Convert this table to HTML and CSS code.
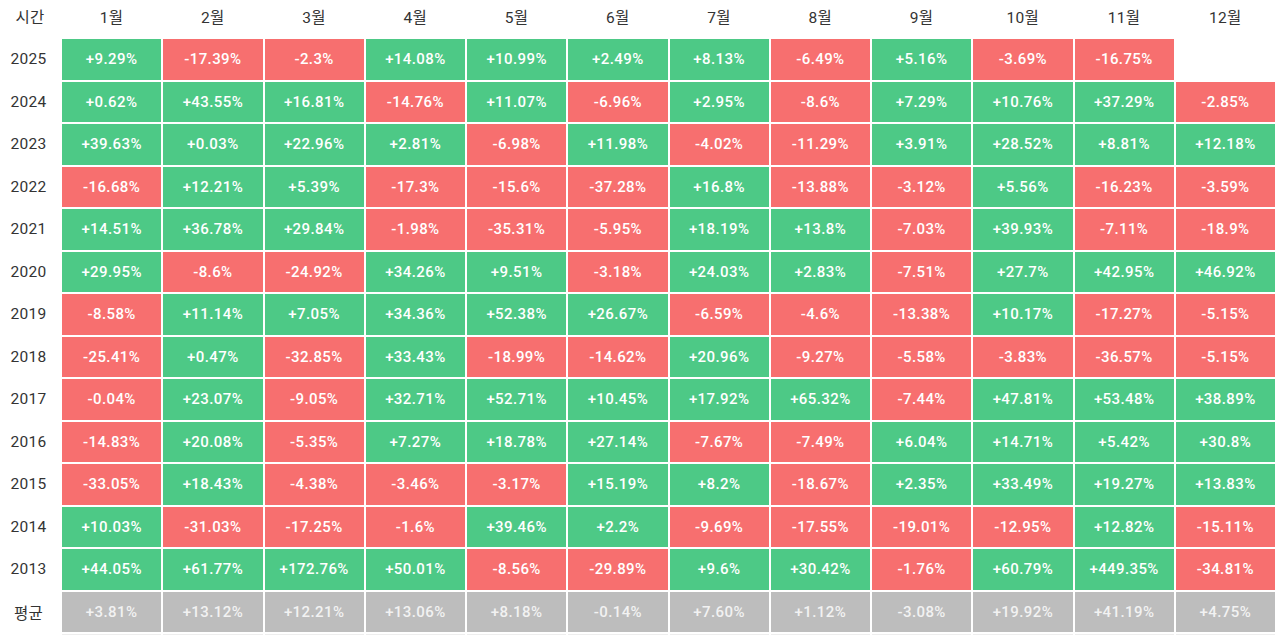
FILE: index.html
```html
<!DOCTYPE html>
<html lang="ko">
<head>
<meta charset="utf-8">
<title>월별 수익률</title>
<link rel="stylesheet" href="styles.css">
</head>
<body>
<div class="grid">
  <div class="hd lbl">시간</div>
  <div class="hd">1월</div><div class="hd">2월</div><div class="hd">3월</div><div class="hd">4월</div><div class="hd">5월</div><div class="hd">6월</div><div class="hd">7월</div><div class="hd">8월</div><div class="hd">9월</div><div class="hd">10월</div><div class="hd">11월</div><div class="hd">12월</div>

  <div class="yr">2025</div>
  <div class="c up">+9.29%</div><div class="c dn">-17.39%</div><div class="c dn">-2.3%</div><div class="c up">+14.08%</div><div class="c up">+10.99%</div><div class="c up">+2.49%</div><div class="c up">+8.13%</div><div class="c dn">-6.49%</div><div class="c up">+5.16%</div><div class="c dn">-3.69%</div><div class="c dn">-16.75%</div><div class="c empty"></div>

  <div class="yr">2024</div>
  <div class="c up">+0.62%</div><div class="c up">+43.55%</div><div class="c up">+16.81%</div><div class="c dn">-14.76%</div><div class="c up">+11.07%</div><div class="c dn">-6.96%</div><div class="c up">+2.95%</div><div class="c dn">-8.6%</div><div class="c up">+7.29%</div><div class="c up">+10.76%</div><div class="c up">+37.29%</div><div class="c dn">-2.85%</div>

  <div class="yr">2023</div>
  <div class="c up">+39.63%</div><div class="c up">+0.03%</div><div class="c up">+22.96%</div><div class="c up">+2.81%</div><div class="c dn">-6.98%</div><div class="c up">+11.98%</div><div class="c dn">-4.02%</div><div class="c dn">-11.29%</div><div class="c up">+3.91%</div><div class="c up">+28.52%</div><div class="c up">+8.81%</div><div class="c up">+12.18%</div>

  <div class="yr">2022</div>
  <div class="c dn">-16.68%</div><div class="c up">+12.21%</div><div class="c up">+5.39%</div><div class="c dn">-17.3%</div><div class="c dn">-15.6%</div><div class="c dn">-37.28%</div><div class="c up">+16.8%</div><div class="c dn">-13.88%</div><div class="c dn">-3.12%</div><div class="c up">+5.56%</div><div class="c dn">-16.23%</div><div class="c dn">-3.59%</div>

  <div class="yr">2021</div>
  <div class="c up">+14.51%</div><div class="c up">+36.78%</div><div class="c up">+29.84%</div><div class="c dn">-1.98%</div><div class="c dn">-35.31%</div><div class="c dn">-5.95%</div><div class="c up">+18.19%</div><div class="c up">+13.8%</div><div class="c dn">-7.03%</div><div class="c up">+39.93%</div><div class="c dn">-7.11%</div><div class="c dn">-18.9%</div>

  <div class="yr">2020</div>
  <div class="c up">+29.95%</div><div class="c dn">-8.6%</div><div class="c dn">-24.92%</div><div class="c up">+34.26%</div><div class="c up">+9.51%</div><div class="c dn">-3.18%</div><div class="c up">+24.03%</div><div class="c up">+2.83%</div><div class="c dn">-7.51%</div><div class="c up">+27.7%</div><div class="c up">+42.95%</div><div class="c up">+46.92%</div>

  <div class="yr">2019</div>
  <div class="c dn">-8.58%</div><div class="c up">+11.14%</div><div class="c up">+7.05%</div><div class="c up">+34.36%</div><div class="c up">+52.38%</div><div class="c up">+26.67%</div><div class="c dn">-6.59%</div><div class="c dn">-4.6%</div><div class="c dn">-13.38%</div><div class="c up">+10.17%</div><div class="c dn">-17.27%</div><div class="c dn">-5.15%</div>

  <div class="yr">2018</div>
  <div class="c dn">-25.41%</div><div class="c up">+0.47%</div><div class="c dn">-32.85%</div><div class="c up">+33.43%</div><div class="c dn">-18.99%</div><div class="c dn">-14.62%</div><div class="c up">+20.96%</div><div class="c dn">-9.27%</div><div class="c dn">-5.58%</div><div class="c dn">-3.83%</div><div class="c dn">-36.57%</div><div class="c dn">-5.15%</div>

  <div class="yr">2017</div>
  <div class="c dn">-0.04%</div><div class="c up">+23.07%</div><div class="c dn">-9.05%</div><div class="c up">+32.71%</div><div class="c up">+52.71%</div><div class="c up">+10.45%</div><div class="c up">+17.92%</div><div class="c up">+65.32%</div><div class="c dn">-7.44%</div><div class="c up">+47.81%</div><div class="c up">+53.48%</div><div class="c up">+38.89%</div>

  <div class="yr">2016</div>
  <div class="c dn">-14.83%</div><div class="c up">+20.08%</div><div class="c dn">-5.35%</div><div class="c up">+7.27%</div><div class="c up">+18.78%</div><div class="c up">+27.14%</div><div class="c dn">-7.67%</div><div class="c dn">-7.49%</div><div class="c up">+6.04%</div><div class="c up">+14.71%</div><div class="c up">+5.42%</div><div class="c up">+30.8%</div>

  <div class="yr">2015</div>
  <div class="c dn">-33.05%</div><div class="c up">+18.43%</div><div class="c dn">-4.38%</div><div class="c dn">-3.46%</div><div class="c dn">-3.17%</div><div class="c up">+15.19%</div><div class="c up">+8.2%</div><div class="c dn">-18.67%</div><div class="c up">+2.35%</div><div class="c up">+33.49%</div><div class="c up">+19.27%</div><div class="c up">+13.83%</div>

  <div class="yr">2014</div>
  <div class="c up">+10.03%</div><div class="c dn">-31.03%</div><div class="c dn">-17.25%</div><div class="c dn">-1.6%</div><div class="c up">+39.46%</div><div class="c up">+2.2%</div><div class="c dn">-9.69%</div><div class="c dn">-17.55%</div><div class="c dn">-19.01%</div><div class="c dn">-12.95%</div><div class="c up">+12.82%</div><div class="c dn">-15.11%</div>

  <div class="yr">2013</div>
  <div class="c up">+44.05%</div><div class="c up">+61.77%</div><div class="c up">+172.76%</div><div class="c up">+50.01%</div><div class="c dn">-8.56%</div><div class="c dn">-29.89%</div><div class="c up">+9.6%</div><div class="c up">+30.42%</div><div class="c dn">-1.76%</div><div class="c up">+60.79%</div><div class="c up">+449.35%</div><div class="c dn">-34.81%</div>

  <div class="yr lbl">평균</div>
  <div class="c avg">+3.81%</div><div class="c avg">+13.12%</div><div class="c avg">+12.21%</div><div class="c avg">+13.06%</div><div class="c avg">+8.18%</div><div class="c avg">-0.14%</div><div class="c avg">+7.60%</div><div class="c avg">+1.12%</div><div class="c avg">-3.08%</div><div class="c avg">+19.92%</div><div class="c avg">+41.19%</div><div class="c avg">+4.75%</div>

  <div class="yr"></div>
  <div class="c next"></div><div class="c next"></div><div class="c next"></div><div class="c next"></div><div class="c next"></div><div class="c next"></div><div class="c next"></div><div class="c next"></div><div class="c next"></div><div class="c next"></div><div class="c next"></div><div class="c next"></div>
</div>
</body>
</html>
```

FILE: styles.css
```css
html, body {
  margin: 0;
  padding: 0;
  background: #ffffff;
  overflow: hidden;
}

body {
  font-family: Roboto, "Noto Sans CJK KR", sans-serif;
  color: #333333;
}

.grid {
  display: grid;
  grid-template-columns: 60px repeat(12, 1fr);
  grid-template-rows: 37px;
  grid-auto-rows: 40.5px;
  gap: 2px;
  width: 1275px;
  height: 635px;
  overflow: hidden;
}

.hd {
  display: flex;
  align-items: center;
  justify-content: center;
  font-size: 15.5px;
  color: #333333;
  padding-bottom: 6px;
  box-sizing: border-box;
  letter-spacing: 0.3px;
}

.lbl {
  font-family: "Noto Sans CJK KR", sans-serif;
}

.yr {
  display: flex;
  align-items: center;
  justify-content: center;
  font-size: 15.5px;
  color: #333333;
  padding-right: 3px;
  letter-spacing: 0.3px;
}

.c {
  display: flex;
  align-items: center;
  justify-content: center;
  font-size: 15px;
  font-weight: 500;
  color: #ffffff;
  letter-spacing: 0.4px;
}

.up {
  background: #4dc986;
}

.dn {
  background: #f76f6f;
}

.avg {
  background: #bdbdbd;
  color: #f2f2f2;
}

.empty {
  background: transparent;
}

.next {
  border-top: 2px solid #eeeeee;
  background: #ffffff;
}
```
